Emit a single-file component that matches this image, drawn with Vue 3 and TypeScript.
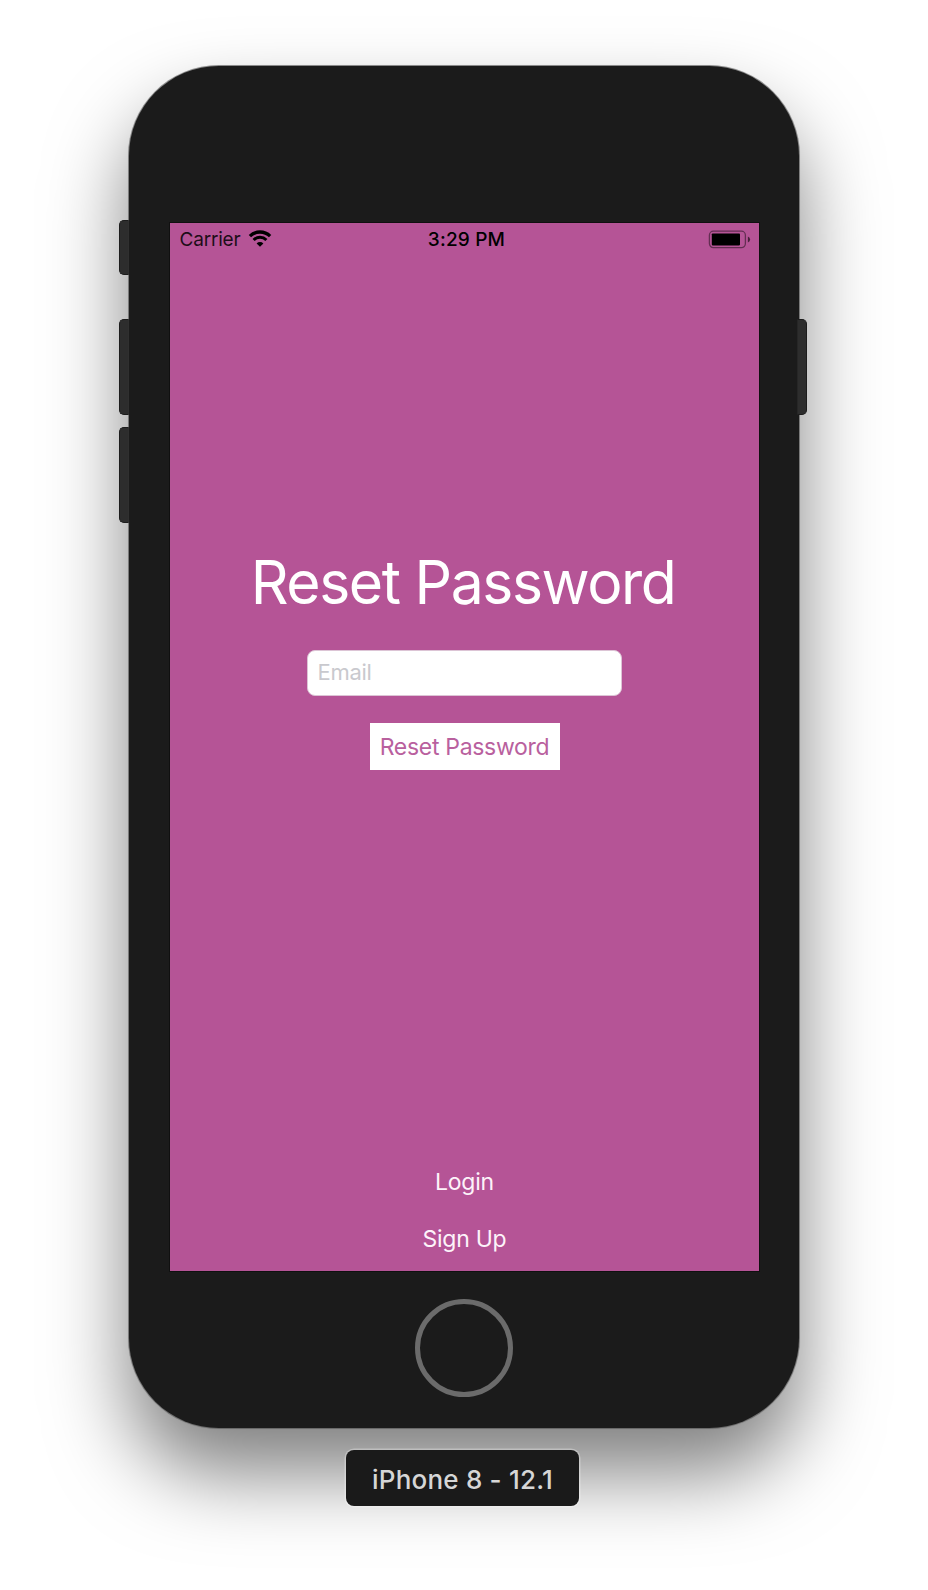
<script setup lang="ts">
import { ref } from 'vue'

const email = ref<string>('')
const links: { label: string; cls: string }[] = [
  { label: 'Login', cls: 'login' },
  { label: 'Sign Up', cls: 'signup' },
]
</script>

<template>
  <main class="stage">
    <div class="device">
      <i class="key mute"></i>
      <i class="key up"></i>
      <i class="key down"></i>
      <i class="key power"></i>

      <section class="screen">
        <header class="status">
          <div class="carrier">
            <span>Carrier</span>
            <svg class="wifi" width="24" height="18" viewBox="0 0 24 18">
              <path d="M1.9 6.2 A14.3 14.3 0 0 1 22.1 6.2" fill="none" stroke="#000" stroke-width="3.3" />
              <path d="M5.6 10 A9.1 9.1 0 0 1 18.4 10" fill="none" stroke="#000" stroke-width="3" />
              <path d="M8.6 13.4 A4.8 4.8 0 0 1 15.4 13.4 L12 16.8Z" fill="#000" />
            </svg>
          </div>
          <span class="time">3:29 PM</span>
          <svg class="battery" width="43" height="19" viewBox="0 0 43 19">
            <rect x="1.4" y="1.2" width="36" height="16.4" rx="4" fill="none" stroke="#000" stroke-opacity=".45" stroke-width="1.3" />
            <rect x="3.8" y="3.4" width="28.2" height="12" rx=".8" fill="#000" />
            <path d="M39.9 6.4 Q42.1 7.4 42.1 9.4 Q42.1 11.4 39.9 12.4Z" fill="#000" fill-opacity=".6" />
          </svg>
        </header>

        <h1>Reset Password</h1>
        <input v-model="email" type="email" placeholder="Email" />
        <button class="reset" type="button"><span>Reset Password</span></button>

        <nav>
          <a v-for="l in links" :key="l.label" :class="l.cls">{{ l.label }}</a>
        </nav>
      </section>

      <div class="home"></div>
    </div>
    <div class="caption"><span>iPhone 8 - 12.1</span></div>
  </main>
</template>

<style>
body {
  background: #fff;
}
</style>

<style scoped>
.stage {
  width: 928px;
  height: 1590px;
  box-sizing: border-box;
  padding-top: 66px;
  overflow: hidden;
  display: flex;
  flex-direction: column;
  align-items: center;
  font-family: Inter, 'Liberation Sans', sans-serif;
}
.device {
  position: relative;
  width: 670px;
  height: 1362px;
  flex: none;
  box-sizing: border-box;
  padding-top: 157px;
  display: flex;
  flex-direction: column;
  align-items: center;
  background: #1b1b1b;
  border-radius: 90px;
  box-shadow:
    0 0 0 1px rgba(90, 90, 90, 0.65),
    0 0 2px rgba(0, 0, 0, 0.2),
    0 45px 80px rgba(0, 0, 0, 0.5);
}
.key {
  position: absolute;
  left: -10px;
  width: 10px;
  height: 96px;
  box-sizing: border-box;
  background: #2d2d2d;
  border: 1px solid #1c1c1c;
  border-right-color: #303030;
  border-radius: 5px 0 0 5px;
}
.mute {
  top: 154px;
  height: 55px;
}
.up {
  top: 253px;
}
.down {
  top: 361px;
}
.power {
  top: 253px;
  left: 668px;
  border-color: #1c1c1c;
  border-left-color: #262626;
  border-radius: 0 5px 5px 0;
}
.screen {
  width: 589px;
  height: 1048px;
  flex: none;
  box-sizing: border-box;
  background: #b55496;
  outline: 1px solid #101010;
  display: flex;
  flex-direction: column;
  align-items: center;
}
.status {
  width: 100%;
  height: 33px;
  box-sizing: border-box;
  padding: 0 8px 0 10px;
  display: grid;
  grid-template-columns: 1fr auto 1fr;
  align-items: center;
  font-size: 19px;
  color: #000;
}
.carrier {
  display: flex;
  align-items: center;
  gap: 8px;
  color: #1d0d18;
  letter-spacing: -0.2px;
}
.wifi {
  margin-bottom: 2px;
}
.time {
  font-weight: 550;
  letter-spacing: 0.2px;
  padding-left: 3px;
}
.battery {
  justify-self: end;
}
h1 {
  margin: 289px 0 0;
  padding-right: 1px;
  height: 74px;
  line-height: 74px;
  font-size: 61px;
  font-weight: 400;
  letter-spacing: -1.5px;
  transform: scaleX(0.965);
  white-space: nowrap;
  color: #fff;
}
input {
  margin-top: 31px;
  width: 315px;
  height: 46px;
  box-sizing: border-box;
  border: 1px solid #dcc4d5;
  border-radius: 8px;
  padding: 0 10px 2px;
  background: #fff;
  font: 400 22px Inter, 'Liberation Sans', sans-serif;
  letter-spacing: -0.3px;
  outline: none;
}
input::placeholder {
  color: #c9c9ce;
  opacity: 1;
}
.reset {
  margin-top: 27px;
  margin-left: 1px;
  width: 190px;
  height: 47px;
  padding: 0;
  border: 0;
  background: #fff;
  color: #b9609e;
  font: 400 23px Inter, 'Liberation Sans', sans-serif;
  letter-spacing: -0.3px;
  white-space: nowrap;
}
nav {
  margin-top: auto;
  padding: 0 0 3px 1px;
  display: flex;
  flex-direction: column;
  align-items: center;
  font-size: 23px;
  line-height: 57px;
  letter-spacing: -0.25px;
  color: #fdf3fa;
}
nav a {
  height: 57px;
}
.home {
  margin-top: 28px;
  margin-right: 1px;
  width: 98px;
  height: 98px;
  box-sizing: border-box;
  border: 5px solid #6b6b6b;
  border-radius: 50%;
}
.caption {
  position: relative;
  margin-top: 22px;
  margin-right: 3px;
  width: 233px;
  height: 56px;
  flex: none;
  border-radius: 8px;
  background: #1a1a1a;
  box-shadow: 0 0 0 1.5px rgba(255, 255, 255, 0.3);
  color: #d6d6d6;
  text-align: center;
  font-size: 26px;
  font-weight: 500;
  letter-spacing: 0.2px;
  line-height: 60px;
}
</style>
